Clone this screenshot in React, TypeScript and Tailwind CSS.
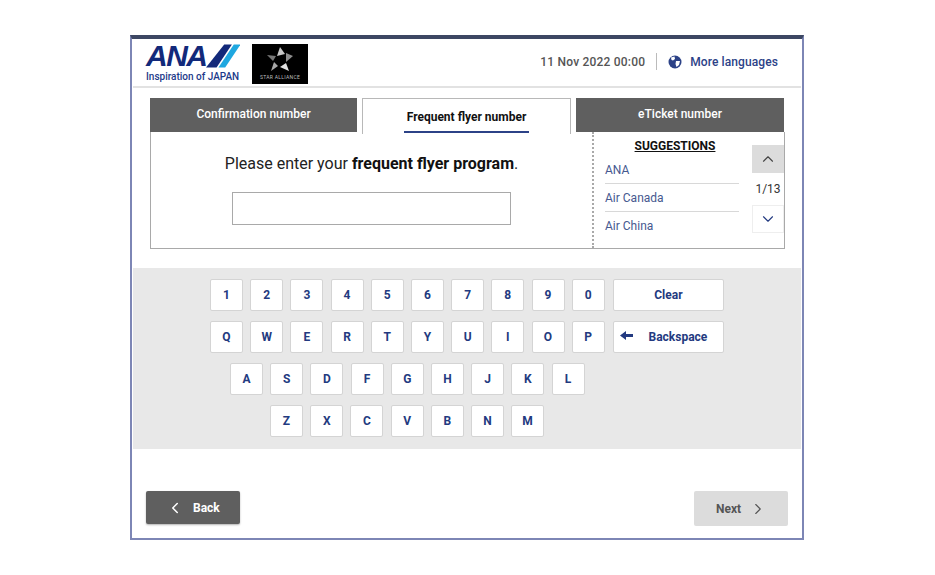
import React from "react";
import { ChevronLeft, ChevronRight, ChevronUp, ChevronDown } from "lucide-react";

const rows = [
  { pad: "pl-[77px]", keys: ["1", "2", "3", "4", "5", "6", "7", "8", "9", "0"], wide: "Clear" },
  { pad: "pl-[77px]", keys: ["Q", "W", "E", "R", "T", "Y", "U", "I", "O", "P"], wide: "Backspace" },
  { pad: "pl-[97px]", keys: ["A", "S", "D", "F", "G", "H", "J", "K", "L"] },
  { pad: "pl-[137px]", keys: ["Z", "X", "C", "V", "B", "N", "M"] },
];

const keyClass =
  "h-[32px] bg-white border border-[#d4d4d4] rounded-[2px] flex items-center justify-center text-[#233a80] text-[12px] font-bold";

const Logo = () => (
  <div className="flex flex-col w-[94px] ml-[13px] mt-[4px]">
    <div className="flex items-center h-[26px]">
      <span className="text-[#12297a] text-[30px] leading-[26px] font-black italic tracking-[-1.5px] font-['Liberation_Sans',sans-serif]">
        ANA
      </span>
      <svg width="36" height="24" viewBox="0 0 36 24" className="ml-[-1px]">
        <polygon points="0,24 19,0 27,0 11,24" fill="#12297a" />
        <polygon points="13,24 29,0 36,0 20,24" fill="#1ea7e0" />
      </svg>
    </div>
    <span className="text-[#1d3a8a] text-[10px] leading-[12px] mt-[2px] font-medium whitespace-nowrap">
      Inspiration of JAPAN
    </span>
  </div>
);

const StarAlliance = () => (
  <div className="w-[56px] h-[40px] bg-black ml-[12px] mt-[5px] flex flex-col items-center">
    <svg width="28" height="28" viewBox="0 0 28 28" className="mt-[1px]">
      <polygon points="14,2 19,9 11,11" fill="#c9c9c9" />
      <polygon points="20,8 27,11 20,17" fill="#8d8d8d" />
      <polygon points="20,18 23,26 14,22" fill="#e2e2e2" />
      <polygon points="12,21 5,26 8,17" fill="#a8a8a8" />
      <polygon points="7,16 1,10 10,11" fill="#777777" />
    </svg>
    <span className="text-[#bdbdbd] text-[5px] leading-[8px] tracking-[0.3px] whitespace-nowrap">STAR ALLIANCE</span>
  </div>
);

const Globe = () => (
  <svg width="14" height="14" viewBox="0 0 14 14">
    <circle cx="7" cy="7" r="6.5" fill="#2c4287" />
    <path d="M3 2.5 L6.5 1.5 L7 4 L5 5.5 L3.5 5 Z M8 6 L12 6 L11 10 L8.5 12 L7.5 9 Z" fill="#ffffff" />
  </svg>
);

const App = () => {
  return (
    <div className="w-[935px] h-[575px] bg-white pt-[35px] pl-[130px] font-['Roboto',sans-serif] overflow-hidden">
      <div className="w-[674px] h-[505px] border-x-2 border-b-2 border-[#7d86b5] border-t-4 border-t-[#3d4763] flex flex-col">
        {/* header */}
        <div className="h-[49px] shrink-0 border-b-2 border-[#e2e2e2] flex mx-[1px]">
          <Logo />
          <StarAlliance />
          <div className="ml-auto flex items-center pr-[23px] pb-[2px] text-[12px]">
            <span className="text-[#555] font-medium tracking-[0.2px]">11 Nov 2022 00:00</span>
            <span className="w-px h-[17px] bg-[#bbb] mx-[11px]" />
            <Globe />
            <span className="text-[#2c4287] font-medium ml-[8px] tracking-[0.1px]">More languages</span>
          </div>
        </div>

        {/* tabs */}
        <div className="flex gap-[5px] ml-[18px] mt-[10px] w-[634px] h-[34px] shrink-0">
          <div className="w-[207px] bg-[#5f5f5f] text-white text-[12px] font-medium flex items-center justify-center pb-[2px]">
            Confirmation number
          </div>
          <div className="w-[209px] h-[36px] bg-white border-x border-t border-[#b8b8b8] text-[#111] text-[12px] font-bold flex flex-col items-center relative z-10">
            <span className="mt-[9px]">Frequent flyer number</span>
            <span className="w-[125px] h-[2px] bg-[#2c4287] mt-[5px]" />
          </div>
          <div className="w-[208px] bg-[#5f5f5f] text-white text-[12px] font-medium flex items-center justify-center pb-[2px]">
            eTicket number
          </div>
        </div>

        {/* entry panel */}
        <div className="ml-[18px] w-[635px] h-[117px] shrink-0 border-x border-b border-[#a9a9a9] flex">
          <div className="w-[441px] flex flex-col items-center">
            <p className="text-[16px] text-[#222] mt-[22px] leading-[20px]">
              Please enter your <b className="font-bold text-[#111]">frequent flyer program</b>.
            </p>
            <div className="w-[279px] h-[33px] border border-[#a9a9a9] mt-[18px]" />
          </div>
          <div className="flex-1 border-l-2 border-dotted border-[#a9a9a9] flex pl-[11px]">
            <div className="w-[134px]">
              <div className="text-[12px] font-bold text-[#111] underline text-center leading-[14px] mt-[7px] pl-[6px]">
                SUGGESTIONS
              </div>
              {["ANA", "Air Canada", "Air China"].map((name, i) => (
                <div
                  key={name}
                  className={`h-[28px] text-[12px] text-[#46598f] flex items-center ${
                    i < 2 ? "border-b border-[#d8d8d8]" : ""
                  } ${i === 0 ? "mt-[3px]" : ""}`}
                >
                  {name}
                </div>
              ))}
            </div>
            <div className="ml-[13px] w-[32px] flex flex-col items-center mt-[13px]">
              <div className="w-[32px] h-[28px] bg-[#dcdcdc] flex items-center justify-center">
                <ChevronUp size={18} strokeWidth={1.5} className="text-[#444]" />
              </div>
              <span className="text-[12px] text-[#333] mt-[9px] leading-[14px]">1/13</span>
              <div className="w-[32px] h-[28px] bg-white border border-[#eee] flex items-center justify-center mt-[9px]">
                <ChevronDown size={18} strokeWidth={1.5} className="text-[#233a80]" />
              </div>
            </div>
          </div>
        </div>

        {/* keyboard */}
        <div className="mt-[19px] ml-[1px] w-[668px] h-[181px] shrink-0 bg-[#e8e8e8] pt-[11px] flex flex-col gap-[10px]">
          {rows.map((row) => (
            <div key={row.keys[0]} className={`flex gap-[7.2px] ${row.pad}`}>
              {row.keys.map((k) => (
                <div key={k} className={`w-[33px] ${keyClass}`}>
                  {k}
                </div>
              ))}
              {row.wide === "Clear" && <div className={`w-[111px] ml-[1px] ${keyClass}`}>Clear</div>}
              {row.wide === "Backspace" && (
                <div className={`w-[111px] ml-[1px] relative ${keyClass}`}>
                  <svg width="13" height="9" viewBox="0 0 13 9" className="absolute left-[6px] top-[9px]">
                    <polygon points="0,4.5 6,0 6,3 13,3 13,6 6,6 6,9" fill="#233a80" />
                  </svg>
                  <span className="pl-[19px]">Backspace</span>
                </div>
              )}
            </div>
          ))}
        </div>

        {/* footer */}
        <div className="flex justify-between ml-[14px] mr-[14px] mt-[42px]">
          <div className="w-[94px] h-[33px] bg-[#5f5f5f] rounded-[2px] shadow-[0_1px_2px_rgba(0,0,0,0.3)] text-white text-[12px] font-bold flex items-center pl-[20px] gap-[9px]">
            <ChevronLeft size={18} strokeWidth={2} />
            <span>Back</span>
          </div>
          <div className="w-[94px] h-[35px] bg-[#dcdcdc] rounded-[2px] text-[#555] text-[12px] font-bold flex items-center pl-[22px] gap-[8px]">
            <span>Next</span>
            <ChevronRight size={18} strokeWidth={1.5} />
          </div>
        </div>
      </div>
    </div>
  );
};

export default App;
